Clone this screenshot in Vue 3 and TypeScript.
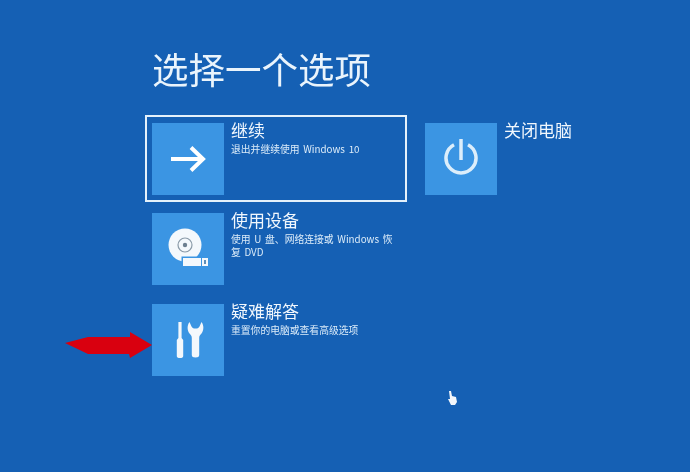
<script setup lang="ts">
interface Option {
  id: string;
  title: string;
  desc: string;
  selected?: boolean;
}

const leftOptions: Option[] = [
  { id: 'continue', title: '继续', desc: '退出并继续使用 Windows 10', selected: true },
  { id: 'device', title: '使用设备', desc: '使用 U 盘、网络连接或 Windows 恢复 DVD' },
  { id: 'trouble', title: '疑难解答', desc: '重置你的电脑或查看高级选项' },
];
</script>

<template>
  <div class="screen">
    <h1 class="heading">选择一个选项</h1>
    <div class="columns">
      <div class="col-left">
        <div
          v-for="opt in leftOptions"
          :key="opt.id"
          class="option"
          :class="{ selected: opt.selected }"
        >
          <div class="tile">
            <svg v-if="opt.id === 'continue'" width="36" height="28" viewBox="0 0 36 28">
              <path d="M1 14H32M21 2.5L33 14L21 25.5" fill="none" stroke="#fff" stroke-width="4" />
            </svg>
            <svg v-else-if="opt.id === 'device'" width="48" height="48" viewBox="0 0 48 48">
              <circle cx="21" cy="20" r="16.5" fill="#f4f8fc" />
              <circle cx="21" cy="20" r="7" fill="none" stroke="#8a9aa8" stroke-width="1.2" />
              <circle cx="21" cy="20" r="2.2" fill="#6d7f90" />
              <rect x="17.5" y="31.5" width="27" height="11" fill="#3b95e3" />
              <rect x="19" y="33" width="18" height="8" fill="#f4f8fc" />
              <rect x="38" y="33" width="6" height="8" fill="#f4f8fc" />
              <rect x="40" y="35" width="2" height="4" fill="#5f8fb8" />
            </svg>
            <svg v-else-if="opt.id === 'trouble'" width="36" height="40" viewBox="0 0 36 40">
              <rect x="8.4" y="2" width="3.2" height="13" fill="#f4f8fc" />
              <path d="M8.4 15H11.6V18L13.2 20V36Q13.2 38 10 38Q6.8 38 6.8 36V20L8.4 18Z" fill="#f4f8fc" />
              <path
                d="M19.5 2C17 5 17 10.5 19.5 13.5C20.8 15 21.8 15.5 21.8 18V35Q21.8 37.5 25.5 37.5Q29.2 37.5 29.2 35V18C29.2 15.5 30.2 15 31.5 13.5C34 10.5 34 5 31.5 2L29.5 6.5C28.6 8.3 27.2 8.6 25.5 8.6C23.8 8.6 22.4 8.3 21.5 6.5Z"
                fill="#f4f8fc"
              />
            </svg>
          </div>
          <div class="copy">
            <div class="title">{{ opt.title }}</div>
            <div class="desc">{{ opt.desc }}</div>
          </div>
        </div>
      </div>

      <div class="col-right">
        <div class="option">
          <div class="tile">
            <svg width="34" height="40" viewBox="0 0 34 40">
              <path d="M10 5.7A15 15 0 1 0 24 5.7" fill="none" stroke="#dceefb" stroke-width="3.5" />
              <path d="M17 0V21" fill="none" stroke="#dceefb" stroke-width="3.5" />
            </svg>
          </div>
          <div class="copy">
            <div class="title shutdown">关闭电脑</div>
          </div>
        </div>
      </div>
    </div>

    <!-- annotation arrow drawn over the screenshot -->
    <svg class="red-arrow" width="90" height="28" viewBox="0 0 90 28">
      <path d="M2 12L25 6H67V1L89 14L67 27L66 23H25Z" fill="#d9000f" />
    </svg>
    <svg class="cursor" width="12" height="16" viewBox="0 0 12 16">
      <path d="M2 1L4 1L5 6L9 7L10 12L8 15H4L1 9L3 9Z" fill="#f2f6fb" />
    </svg>
  </div>
</template>

<style scoped>
.screen {
  position: relative;
  width: 690px;
  height: 472px;
  overflow: hidden;
  box-sizing: border-box;
  padding: 45px 0 0 145px;
  background: #1560b4;
  color: #f1f7fd;
  font-family: "Noto Sans CJK SC", "Liberation Sans", sans-serif;
  filter: blur(0.5px);
}

.heading {
  margin: 0 0 16px 7px;
  height: 54px;
  font-size: 36.5px;
  font-weight: 400;
  line-height: 47px;
  color: #eaf4fc;
}

.columns {
  display: flex;
  align-items: flex-start;
  gap: 11px;
}

.col-left {
  display: flex;
  flex-direction: column;
  gap: 3px;
  width: 262px;
}

.col-left .option:last-child {
  margin-top: 1px;
}

.col-right {
  width: 172px;
}

.option {
  display: flex;
  box-sizing: border-box;
  height: 87px;
  padding: 6px 5px;
  gap: 7px;
  border: 2px solid transparent;
}

.option.selected {
  border-color: #e4f1fb;
}

.tile {
  display: flex;
  flex: none;
  align-items: center;
  justify-content: center;
  width: 72px;
  height: 72px;
  background: #3b95e3;
}

.copy {
  min-width: 0;
  width: 166px;
}

.title {
  margin-top: -5px;
  font-size: 17px;
  line-height: 24px;
}

.shutdown {
  white-space: nowrap;
}

.desc {
  margin-top: 1px;
  font-size: 9.8px;
  line-height: 13px;
  word-spacing: 1.5px;
  color: #dcecf9;
}

.red-arrow {
  position: absolute;
  left: 63px;
  top: 331px;
}

.cursor {
  position: absolute;
  left: 447px;
  top: 390px;
}
</style>
